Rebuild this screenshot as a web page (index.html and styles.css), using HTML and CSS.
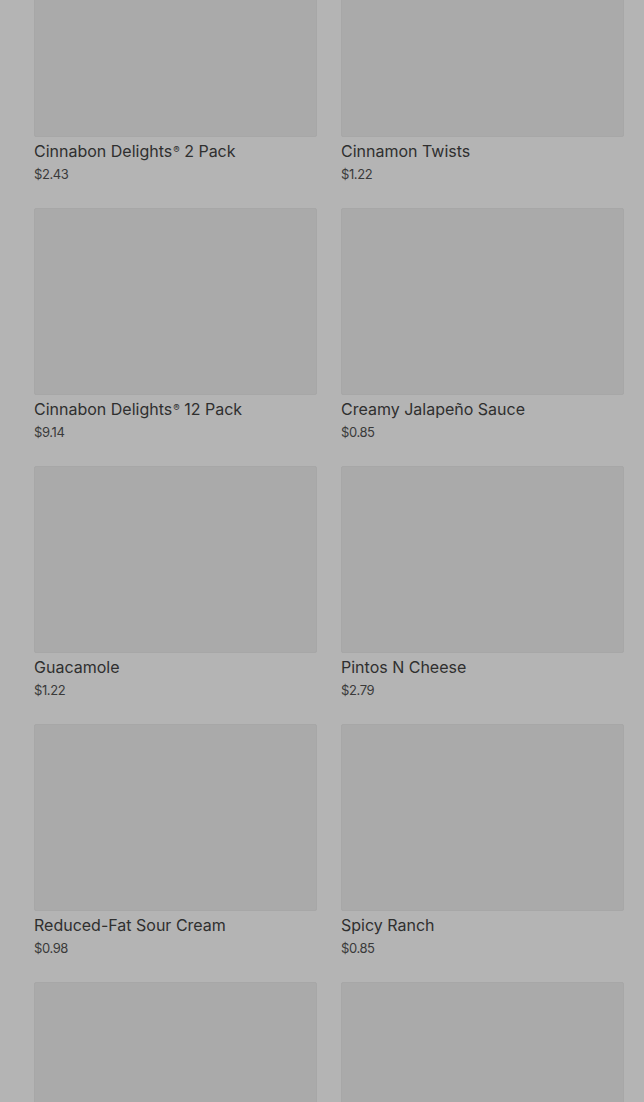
FILE: index.html
```html
<!DOCTYPE html>
<html>
<head>
<meta charset="utf-8">
<link rel="stylesheet" href="styles.css">
</head>
<body>
<main class="grid">
  <div class="item"><div class="thumb"></div><div class="name">Cinnabon Delights<span class="reg">®</span> 2 Pack</div><div class="price">$2.43</div></div>
  <div class="item"><div class="thumb"></div><div class="name">Cinnamon Twists</div><div class="price">$1.22</div></div>
  <div class="item"><div class="thumb"></div><div class="name">Cinnabon Delights<span class="reg">®</span> 12 Pack</div><div class="price">$9.14</div></div>
  <div class="item"><div class="thumb"></div><div class="name">Creamy Jalapeño Sauce</div><div class="price">$0.85</div></div>
  <div class="item"><div class="thumb"></div><div class="name">Guacamole</div><div class="price">$1.22</div></div>
  <div class="item"><div class="thumb"></div><div class="name">Pintos N Cheese</div><div class="price">$2.79</div></div>
  <div class="item"><div class="thumb"></div><div class="name">Reduced-Fat Sour Cream</div><div class="price">$0.98</div></div>
  <div class="item"><div class="thumb"></div><div class="name">Spicy Ranch</div><div class="price">$0.85</div></div>
  <div class="item"><div class="thumb"></div><div class="name">&nbsp;</div><div class="price">&nbsp;</div></div>
  <div class="item"><div class="thumb"></div><div class="name">&nbsp;</div><div class="price">&nbsp;</div></div>
</main>
</body>
</html>
```
FILE: styles.css
```css
html, body {
  margin: 0;
  padding: 0;
  background: #b4b4b4;
  overflow: hidden;
}
body {
  height: 1102px;
  font-family: Inter, Roboto, "Liberation Sans", sans-serif;
  color: #333;
}
.grid {
  display: grid;
  grid-template-columns: 283px 283px;
  column-gap: 24px;
  row-gap: 25px;
  padding: 0 20px 0 34px;
  margin-top: -50px;
}
.thumb {
  height: 187px;
  background: #aaaaaa;
  border: 1px solid #a7a7a7;
  border-radius: 2px;
  box-sizing: border-box;
}
.name {
  margin-top: 2px;
  font-size: 16px;
  line-height: 24px;
  font-weight: 400;
  color: #2f2f2f;
}
.reg {
  font-size: 0.6em;
  vertical-align: 0.45em;
  line-height: 0;
  margin-left: 1px;
}
.price {
  margin-top: 2px;
  font-size: 13px;
  line-height: 18px;
  color: #3a3a3a;
  letter-spacing: -0.4px;
}
```
